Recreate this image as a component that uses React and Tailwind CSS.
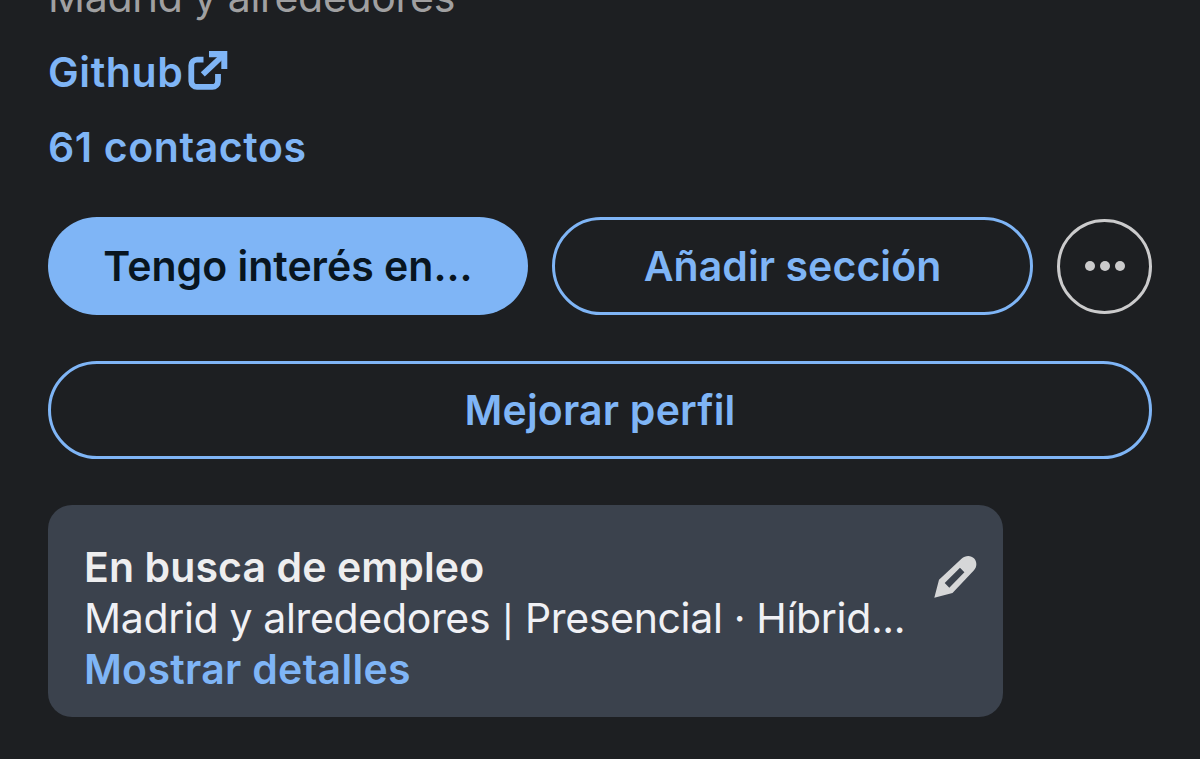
function ExternalIcon() {
  return (
    <svg className="ml-[5px] h-10 w-10 shrink-0" viewBox="0 0 40 40" fill="none" stroke="#7fb5f6" strokeWidth="5.8">
      <path d="M15.500 8.700H9A5.700 5.700 0 0 0 3.300 14.400V30.200a5.700 5.700 0 0 0 5.700 5.700H24.300a5.700 5.700 0 0 0 5.700-5.700V23" />
      <path d="M14.800 23.300L36 3.500" />
      <path d="M21 0H39.300V18H33.300V6.200H21Z" fill="#7fb5f6" stroke="none" />
    </svg>
  );
}

function PencilIcon() {
  return (
    <svg className="mt-3 h-[43px] w-[43px] shrink-0" viewBox="0 0 43 43" fill="#d6d7d8">
      <path fillRule="evenodd" d="M0.300 42.700L5 24.700L27.500 3.800C31.500 0 37 0 40.200 3.600C43.200 7.200 43 12 40 15.300L18.500 37.900ZM26 12.800L10.700 28L15.300 32.700L30.400 17.200Z" />
    </svg>
  );
}

export default function App() {
  return (
    <main className="flex h-[759px] w-[1200px] flex-col overflow-hidden bg-[#1d1f22] px-12 font-['Inter',sans-serif] text-[41px] leading-[50px] font-semibold whitespace-nowrap text-[#7fb5f6]">
      <p className="-mt-[28px] font-normal tracking-[-0.3px] text-[#a0a0a1]"><span>Madrid y alrededores</span></p>
      <a className="mt-[25px] flex items-center tracking-[0.6px]"><span>Github</span><span className="-mt-0.5 flex"><ExternalIcon /></span></a>
      <a className="mt-[25px] tracking-[0.6px]"><span>61 contactos</span></a>
      <div className="mt-[45px] flex h-[98px] items-center gap-6">
        <button className="h-[98px] w-[480px] rounded-full bg-[#7fb5f6] text-[#081520]"><span>Tengo interés en...</span></button>
        <button className="h-[98px] w-[481px] rounded-full border-3 border-[#7fb5f6] tracking-[0.07px]"><span>Añadir sección</span></button>
        <button className="flex h-[95px] w-[95px] items-center justify-center gap-[5px] rounded-full border-3 border-[#cbcbcc]">
          <i className="size-[10px] rounded-full bg-[#cbcbcc]" />
          <i className="size-[10px] rounded-full bg-[#cbcbcc]" />
          <i className="size-[10px] rounded-full bg-[#cbcbcc]" />
        </button>
      </div>
      <button className="mt-[46px] h-[98px] w-[1104px] rounded-full border-3 border-[#7fb5f6] tracking-[0.2px]"><span>Mejorar perfil</span></button>
      <section className="mt-[46px] flex h-[212px] w-[955px] justify-between rounded-3xl bg-[#3b424d] pt-[38px] pr-[26px] pl-9">
        <div className="flex flex-col leading-[51px]">
          <h2 className="-mt-px tracking-[0.1px] text-[#eeeeef]"><span>En busca de empleo</span></h2>
          <p className="font-normal tracking-[-0.34px] text-[#f0f1f5]">Madrid y alrededores <span className="px-px text-[31px] leading-none font-medium">|</span> Presencial · Híbrid...</p>
          <a className="tracking-[0.3px]"><span>Mostrar detalles</span></a>
        </div>
        <PencilIcon />
      </section>
    </main>
  );
}
